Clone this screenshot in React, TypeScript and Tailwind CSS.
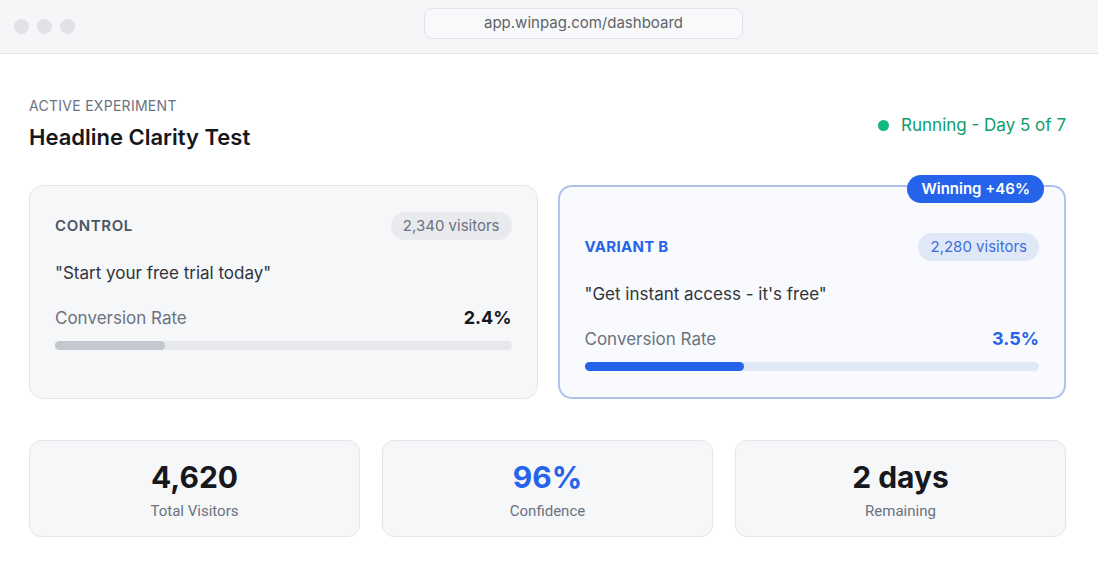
const font = { fontFamily: 'Inter, "Open Sans", sans-serif' }

function Stat({ value, label, blue }: { value: string; label: string; blue?: boolean }) {
  return (
    <div className="flex h-[97px] flex-col items-center rounded-xl border border-[#e4e6ea] bg-[#f6f7f9] pt-[18px]">
      <div className={`text-[30px] font-bold leading-9 ${blue ? 'text-[#2563eb]' : 'text-[#16181d]'}`}>{value}</div>
      <div className="mt-[6px] text-[15px] leading-5 text-[#6b7280]" style={{ fontFamily: 'Roboto, sans-serif' }}>{label}</div>
    </div>
  )
}

export default function App() {
  return (
    <div className="min-h-screen bg-white" style={font}>
      <div className="relative flex h-[54px] items-center border-b border-[#e6e7ea] bg-[#f5f6f8]">
        <div className="ml-[14px] flex gap-[8px]">
          <span className="h-[15px] w-[15px] rounded-full bg-[#e1e2e7]" />
          <span className="h-[15px] w-[15px] rounded-full bg-[#e1e2e7]" />
          <span className="h-[15px] w-[15px] rounded-full bg-[#e1e2e7]" />
        </div>
        <div className="absolute left-[424px] top-[8px] flex h-[31px] w-[319px] items-center justify-center rounded-lg border border-[#e3e4e8] bg-[#f8f9fa] text-[15px] text-[#5f6368]">
          app.winpag.com/dashboard
        </div>
      </div>

      <div className="px-[29px] pr-[32px] pt-[42px]">
        <div className="flex items-center justify-between">
          <div>
            <div className="text-[14px] uppercase leading-5 tracking-[0.02em] text-[#6b7280]">Active Experiment</div>
            <h1 className="mt-[7px] text-[22px] font-semibold leading-7 text-[#16181d]">Headline Clarity Test</h1>
          </div>
          <div className="flex items-center gap-[12px] pt-[4px] text-[17px] text-[#0f9d6a]">
            <span className="h-[11px] w-[11px] rounded-full bg-[#10b981]" />
            Running - Day 5 of 7
          </div>
        </div>

        <div className="mt-[34px] grid grid-cols-2 gap-[20px]">
          <div className="rounded-[14px] border border-[#e4e6ea] bg-[#f6f7f9] px-[25px] pt-[26px]">
            <div className="flex items-center justify-between">
              <span className="text-[15px] font-semibold tracking-[0.04em] text-[#4b5563]">CONTROL</span>
              <span className="flex h-[28px] items-center rounded-full bg-[#e9eaee] px-[12px] text-[15px] text-[#6b7280]">2,340 visitors</span>
            </div>
            <div className="mt-[21px] text-[17px] leading-6 text-[#30343b]">"Start your free trial today"</div>
            <div className="mt-[20px] flex items-center justify-between leading-[26px]">
              <span className="text-[17px] text-[#6b7280]">Conversion Rate</span>
              <span className="text-[18px] font-bold text-[#16181d]">2.4%</span>
            </div>
            <div className="mt-[10px] h-[9px] rounded-full bg-[#e7e8ec]">
              <div className="h-full w-[24%] rounded-full bg-[#c4c7cd]" />
            </div>
          </div>

          <div className="relative rounded-[14px] border-2 border-[#adc3ec] bg-[#f8fafd] px-[25px] pb-[26px] pt-[46px]">
            <span className="absolute right-[20px] top-[-12px] flex h-[28px] items-center rounded-full bg-[#2563eb] px-[14px] text-[15px] font-semibold text-white">
              Winning +46%
            </span>
            <div className="flex items-center justify-between">
              <span className="text-[15px] font-bold tracking-[0.02em] text-[#2563eb]">VARIANT B</span>
              <span className="flex h-[28px] items-center rounded-full bg-[#e0e8f7] px-[12px] text-[15px] text-[#3b6fd8]">2,280 visitors</span>
            </div>
            <div className="mt-[21px] text-[17px] leading-6 text-[#30343b]">"Get instant access - it's free"</div>
            <div className="mt-[20px] flex items-center justify-between leading-[26px]">
              <span className="text-[17px] text-[#6b7280]">Conversion Rate</span>
              <span className="text-[18px] font-bold text-[#2563eb]">3.5%</span>
            </div>
            <div className="mt-[10px] h-[9px] rounded-full bg-[#e1e8f6]">
              <div className="h-full w-[35%] rounded-full bg-[#2563eb]" />
            </div>
          </div>
        </div>

        <div className="mt-[41px] grid grid-cols-3 gap-[22px]">
          <Stat value="4,620" label="Total Visitors" />
          <Stat value="96%" label="Confidence" blue />
          <Stat value="2 days" label="Remaining" />
        </div>
      </div>
    </div>
  )
}
